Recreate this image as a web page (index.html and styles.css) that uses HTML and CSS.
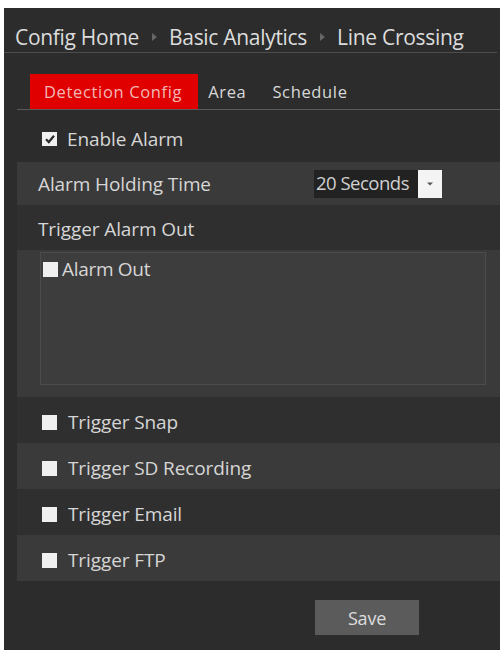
FILE: index.html
```html
<!DOCTYPE html>
<html>
<head>
<meta charset="utf-8">
<link rel="stylesheet" href="styles.css">
</head>
<body>
<div class="panel">
  <div class="crumbs">
    <span>Config Home</span><span class="sep"></span><span>Basic Analytics</span><span class="sep"></span><span>Line Crossing</span>
  </div>
  <div class="tabs">
    <span class="tab active">Detection Config</span>
    <span class="tab">Area</span>
    <span class="tab">Schedule</span>
  </div>
  <div class="enable">
    <span class="cb checked"><svg viewBox="0 0 14 14" width="14" height="14"><path d="M3 7.2 L5.8 10 L11 3.8" fill="none" stroke="#2a2a2a" stroke-width="2.2"/></svg></span>
    <span class="label">Enable Alarm</span>
  </div>
  <div class="section">
    <div class="row light hold">
      <span class="rlabel">Alarm Holding Time</span>
      <div class="select"><span class="sval">20 Seconds</span><span class="sarrow"><svg viewBox="0 0 8 6" width="8" height="6"><path d="M1 1.5 L4 4.5 L7 1.5 Z" fill="#555"/></svg></span></div>
    </div>
    <div class="row dark trig-out">
      <span class="rlabel">Trigger Alarm Out</span>
    </div>
    <div class="outwrap">
      <div class="outbox">
        <div class="outitem"><span class="cb small"></span><span>Alarm Out</span></div>
      </div>
    </div>
    <div class="row dark opt"><span class="cb"></span><span class="label">Trigger Snap</span></div>
    <div class="row light opt"><span class="cb"></span><span class="label">Trigger SD Recording</span></div>
    <div class="row dark opt"><span class="cb"></span><span class="label">Trigger Email</span></div>
    <div class="row light opt"><span class="cb"></span><span class="label">Trigger FTP</span></div>
  </div>
  <div class="actions"><button class="save">Save</button></div>
</div>
</body>
</html>
```

FILE: styles.css
```css
html, body {
  margin: 0;
  padding: 0;
  background: #ffffff;
}
body {
  font-family: "Open Sans", "Noto Sans", "Liberation Sans", sans-serif;
  color: #d6d6d6;
}
.panel {
  margin: 8px 3px 0 4px;
  height: 642px;
  background: #2c2c2c;
  box-sizing: border-box;
}
.crumbs {
  height: 45px;
  box-sizing: border-box;
  padding: 14px 0 0 11px;
  border-bottom: 1px solid #4e4e4e;
  font-size: 21px;
  letter-spacing: -0.3px;
  line-height: 26px;
  color: #dcdcdc;
  display: flex;
  align-items: center;
  margin-right: 3px;
}
.sep {
  display: inline-block;
  width: 0;
  height: 0;
  border-left: 5px solid #666666;
  border-top: 4px solid transparent;
  border-bottom: 4px solid transparent;
  margin: 0 12px 0 13px;
}
.tabs {
  margin: 21px 0 0 13px;
  padding-left: 13px;
  border-bottom: 1px solid #5a5a5a;
  display: flex;
  align-items: stretch;
  height: 35px;
}
.tab {
  font-size: 16.5px;
  letter-spacing: 0.65px;
  line-height: 35px;
  padding: 0 13px;
  color: #d8d8d8;
}
.tab.active {
  background: #e00000;
  color: #f2b8b8;
  padding: 0 16px 0 14px;
}
.tab.active + .tab {
  padding-left: 10px;
}
.enable {
  display: flex;
  align-items: center;
  height: 47px;
  padding: 10px 0 0 38px;
  box-sizing: border-box;
  margin-bottom: 5px;
}
.cb {
  display: inline-block;
  width: 15px;
  height: 15px;
  background: #f0f0f0;
  margin-right: 11px;
  flex: none;
}
.cb svg { display: block; margin: 0.5px; }
.enable .cb { width: 15px; height: 14px; margin-right: 10px; }
.label, .rlabel {
  font-size: 19px;
  letter-spacing: -0.1px;
}
.section {
  margin-left: 13px;
}
.row {
  display: flex;
  align-items: center;
  box-sizing: border-box;
  padding-left: 25px;
}
.row.light { background: #3a3a3a; }
.row.dark { background: #2f2f2f; }
.row.dark, .row.light { height: 46px; }
.row.opt { padding-top: 4px; }
.row.hold { height: 43px; padding-left: 21px; }
.row.trig-out { height: 45px; padding-left: 21px; padding-top: 3px; }
.select {
  margin-left: auto;
  margin-right: 58px;
  display: flex;
  height: 28px;
}
.sval {
  background: #222222;
  width: 104px;
  box-sizing: border-box;
  padding-left: 2px;
  font-size: 18.5px;
  line-height: 26px;
  letter-spacing: -0.5px;
  color: #d0d0d0;
  white-space: nowrap;
  overflow: hidden;
}
.sarrow {
  width: 24px;
  background: #f4f4f4;
  display: flex;
  align-items: center;
  justify-content: center;
}
.outwrap {
  background: #3a3a3a;
  padding: 2px 14px 12px 23px;
  height: 147px;
  box-sizing: border-box;
}
.outbox {
  border: 1px solid #4c4c4c;
  background: #3d3d3d;
  height: 133px;
  box-sizing: border-box;
  padding: 4px 0 0 2px;
}
.outitem {
  display: flex;
  align-items: center;
  font-size: 19px;
  letter-spacing: -0.3px;
  line-height: 24px;
}
.cb.small {
  width: 15px;
  height: 15px;
  margin-right: 4px;
}
.actions {
  display: flex;
  justify-content: flex-start;
  padding: 19px 0 0 311px;
}
.save {
  width: 104px;
  height: 35px;
  border: none;
  background: #5b5b5b;
  color: #dddddd;
  font-family: "Open Sans", "Noto Sans", "Liberation Sans", sans-serif;
  font-size: 18px;
  letter-spacing: -0.2px;
  padding: 0;
}
```
